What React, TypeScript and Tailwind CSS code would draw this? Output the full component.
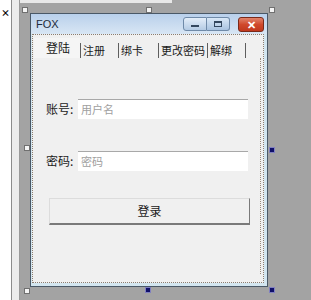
import React from 'react';

const cjk = { fontFamily: '"Noto Sans CJK SC", "Noto Sans", sans-serif' };

const Handle = ({ className, dark }: { className: string; dark?: boolean }) => (
  <div
    className={`absolute w-[6px] h-[6px] border ${
      dark ? 'bg-[#10106a] border-[#8080c0]' : 'bg-[#f4f4f4] border-[#707070]'
    } ${className}`}
  />
);

const tabs = [
  { label: '注册', w: 'w-[38px]' },
  { label: '绑卡', w: 'w-[40px]' },
  { label: '更改密码', w: 'w-[49px]' },
  { label: '解绑', w: 'w-[38px]' },
];

export default function App() {
  return (
    <div className="w-[311px] h-[300px] flex bg-[#a3a3a3] overflow-hidden" style={cjk}>
      {/* left toolbox strip */}
      <div className="flex h-full">
        <div className="w-[12px] h-full bg-white border-r border-[#8c8c8c] flex flex-col">
          <div className="h-[8px]" />
          <div className="h-[9px] flex items-center justify-end pr-[1px] text-[9px] leading-none font-bold text-black">
            ×
          </div>
        </div>
        <div className="w-[8px] h-full bg-[#ececec] border-r border-[#9a9a9a]" />
      </div>

      {/* designer canvas */}
      <div className="relative flex-1 h-full">
        <div className="h-[3px] w-[152px] bg-[#e8e8e8]" />

        <Handle className="left-[2px] top-[7px]" />
        <Handle className="left-[126px] top-[7px]" />
        <Handle className="left-[249px] top-[7px]" />
        <Handle className="left-[4px] top-[145px]" />
        <Handle className="left-[249px] top-[147px]" dark />
        <Handle className="left-[4px] top-[288px]" />
        <Handle className="left-[125px] top-[287px]" dark />
        <Handle className="left-[249px] top-[287px]" dark />

        {/* form window */}
        <div className="absolute left-[10px] top-[13px] w-[238px] h-[274px] border border-[#4a5866] bg-[#d3e6f0] flex flex-col">
          {/* title bar */}
          <div className="h-[20px] shrink-0 flex items-center bg-gradient-to-b from-[#b9d0eb] to-[#d8e6f4]">
            <span className="pl-[5px] text-[11px] text-[#1e2b3a] flex-1" style={{ fontFamily: '"Liberation Sans", Arial, sans-serif' }}>
              FOX
            </span>
            <div className="flex items-start self-start mt-[3px] mr-[3px]">
              <div className="w-[24px] h-[14px] border border-[#6f8aa8] rounded-l-[3px] bg-gradient-to-b from-[#e4eef9] to-[#b4cbe4] flex items-center justify-center">
                <div className="w-[8px] h-[2px] bg-[#33475e] mt-[3px]" />
              </div>
              <div className="w-[23px] h-[14px] border border-l-0 border-[#6f8aa8] rounded-r-[3px] bg-gradient-to-b from-[#d9e8f7] to-[#a9c3e0] flex items-center justify-center">
                <div className="w-[8px] h-[6px] border border-[#33475e] border-t-2" />
              </div>
              <div className="w-[26px] h-[15px] ml-[8px] border border-[#7a2a1a] rounded-[3px] bg-gradient-to-b from-[#e0826a] via-[#d0492c] to-[#c0381d] flex items-center justify-center text-white text-[11px] font-bold leading-none">
                ✕
              </div>
            </div>
          </div>

          {/* client area */}
          <div className="flex-1 mr-[3px] mb-[3px] ml-[1px] bg-[#f0f0f0] border border-dotted border-[#8a7d70] flex flex-col pl-[1px] pt-[3px] pr-[2px] pb-[8px]">
            {/* tab headers */}
            <div className="h-[20px] shrink-0 flex items-end text-[12px] text-[#1a1a1a] whitespace-nowrap">
              <div className="w-[46px] h-[20px] flex items-center pl-[12px] bg-[#f5f5f5]">登陆</div>
              {tabs.map((t) => (
                <div key={t.label} className={`${t.w} h-[15px] flex items-center border-l border-[#5e5e5e] pl-[2px] text-[11px] leading-none`}>
                  {t.label}
                </div>
              ))}
              <div className="h-[15px] border-l border-[#5e5e5e]" />
            </div>

            {/* tab panel */}
            <div className="flex-1 border-r border-dotted border-[#9a8a7a] flex flex-col pl-[12px] pr-[12px] pt-[41px]">
              <div className="flex items-center h-[20px]">
                <span className="w-[32px] text-[12px] text-[#1a1a1a]">账号:</span>
                <div className="flex-1 h-[20px] bg-white border-t border-[#a8a8a8] flex items-center pl-[3px] text-[11px] text-[#a0a0a0]">
                  用户名
                </div>
              </div>
              <div className="flex items-center h-[20px] mt-[32px]">
                <span className="w-[32px] text-[12px] text-[#1a1a1a]">密码:</span>
                <div className="flex-1 h-[20px] bg-white border-t border-[#a8a8a8] flex items-center pl-[3px] text-[11px] text-[#a0a0a0]">
                  密码
                </div>
              </div>
              <div className="mt-[27px] ml-[3px] mr-[-2px] h-[27px] bg-[#f0f0f0] border border-[#dcdcdc] border-r-[#7a7a7a] border-b-2 border-b-[#7a7a7a] flex items-center justify-center text-[12px] text-[#1a1a1a]">
                登录
              </div>
            </div>
          </div>
        </div>
      </div>
    </div>
  );
}
